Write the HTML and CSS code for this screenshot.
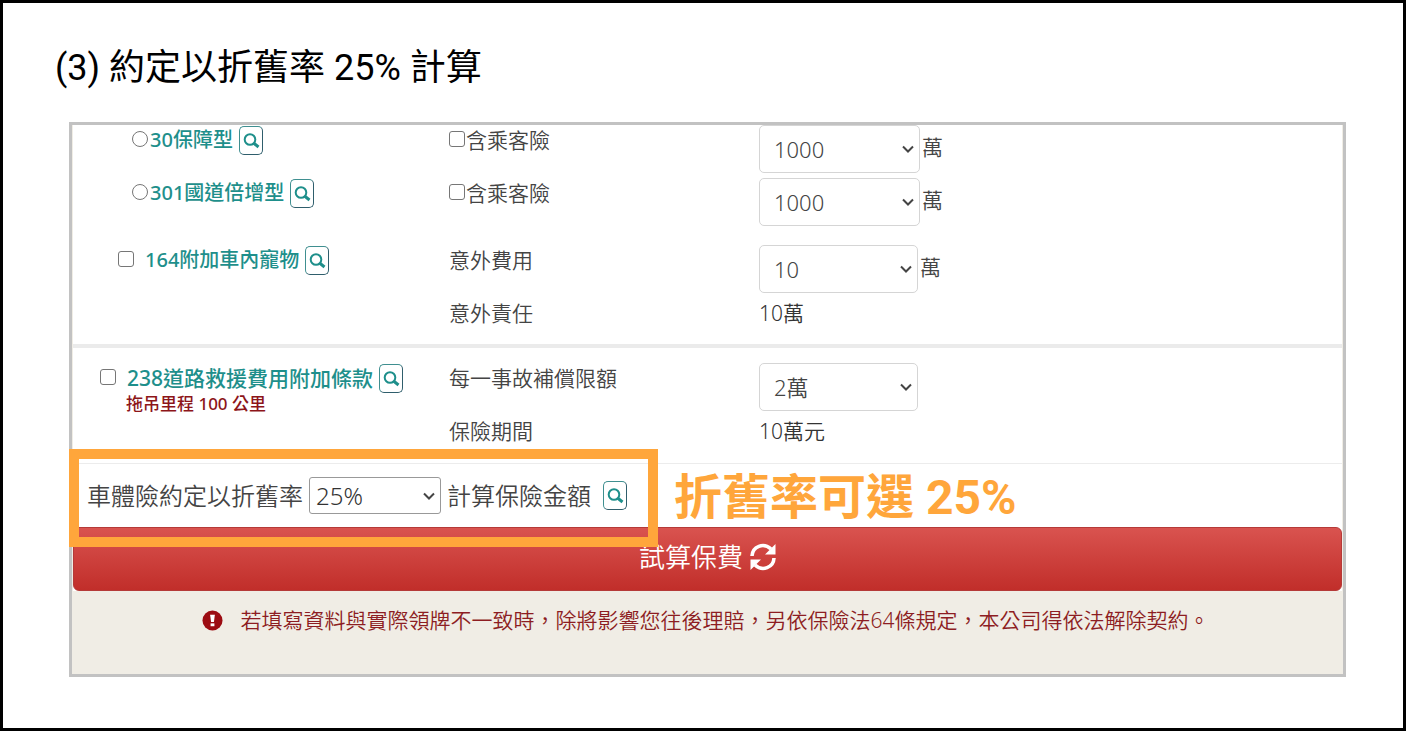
FILE: index.html
```html
<!DOCTYPE html>
<html lang="zh-Hant-TW">
<head>
<meta charset="utf-8">
<title>約定以折舊率 25% 計算</title>
<link rel="stylesheet" href="styles.css">
</head>
<body>
<svg class="sprite" aria-hidden="true">
  <symbol id="search" viewBox="0 0 22 27"><circle cx="10" cy="12.500" r="5.300" fill="none" stroke="currentColor" stroke-width="2"/><path d="M13.500 16L18.500 20" stroke="currentColor" stroke-width="3"/></symbol>
  <symbol id="chevron" viewBox="0 0 12 8"><path d="M1 1.5L6 6.5L11 1.5" fill="none" stroke="currentColor" stroke-width="2"/></symbol>
</svg>
<main class="page">
  <h1 class="title">(3) 約定以折舊率 25% 計算</h1>
  <div class="panel">
    <form class="form">
      <section class="group">
        <div class="row">
          <div class="name name-plan"><input class="radio" type="radio" name="plan" id="p30"><label class="link" for="p30">30保障型</label><button class="search" type="button" aria-label="查詢"><svg><use href="#search"/></svg></button></div>
          <div class="item"><input class="box" type="checkbox" id="c30"><label for="c30">含乘客險</label></div>
          <div class="value"><span class="pick pick-wide"><select aria-label="30保障型保額"><option>1000</option></select><svg class="chevron"><use href="#chevron"/></svg></span><span class="unit">萬</span></div>
        </div>
        <div class="row row-last">
          <div class="name name-plan"><input class="radio" type="radio" name="plan" id="p301"><label class="link" for="p301">301國道倍增型</label><button class="search" type="button" aria-label="查詢"><svg><use href="#search"/></svg></button></div>
          <div class="item"><input class="box" type="checkbox" id="c301"><label for="c301">含乘客險</label></div>
          <div class="value"><span class="pick pick-wide"><select aria-label="301國道倍增型保額"><option>1000</option></select><svg class="chevron"><use href="#chevron"/></svg></span><span class="unit">萬</span></div>
        </div>
        <div class="row">
          <div class="name name-extra"><input class="box box-spaced" type="checkbox" id="c164"><label class="link" for="c164">164附加車內寵物</label><button class="search" type="button" aria-label="查詢"><svg><use href="#search"/></svg></button></div>
          <div class="item">意外費用</div>
          <div class="value"><span class="pick"><select aria-label="意外費用"><option>10</option></select><svg class="chevron"><use href="#chevron"/></svg></span><span class="unit">萬</span></div>
        </div>
        <div class="row row-text">
          <div class="item item-second">意外責任</div>
          <div class="amount">10萬</div>
        </div>
      </section>
      <section class="group group-road">
        <div class="row">
          <div class="name name-road"><input class="box box-spaced" type="checkbox" id="c238"><label class="link link-large" for="c238">238道路救援費用附加條款</label><button class="search" type="button" aria-label="查詢"><svg><use href="#search"/></svg></button><small class="note">拖吊里程 100 公里</small></div>
          <div class="item">每一事故補償限額</div>
          <div class="value"><span class="pick"><select aria-label="每一事故補償限額"><option>2萬</option></select><svg class="chevron"><use href="#chevron"/></svg></span></div>
        </div>
        <div class="row row-text">
          <div class="item item-second">保險期間</div>
          <div class="amount">10萬元</div>
        </div>
      </section>
      <section class="rate">
        <div class="rate-field">
          <label for="rate">車體險約定以折舊率</label>
          <span class="pick pick-rate"><select id="rate"><option>25%</option></select><svg class="chevron"><use href="#chevron"/></svg></span>
          <span>計算保險金額</span>
          <button class="search" type="button" aria-label="查詢"><svg><use href="#search"/></svg></button>
          <div class="highlight"></div>
        </div>
        <strong class="callout">折舊率可選 25%</strong>
      </section>
      <button class="submit" type="button">試算保費<svg class="refresh" viewBox="0 0 26 28"><path d="M2 13C2.500 3.500 13.500 -1 21 6" fill="none" stroke="currentColor" stroke-width="3.600"/><path d="M25.500 1V11.500H15Z" fill="currentColor"/><path d="M24 15C23.500 24.500 12.500 29 5 22" fill="none" stroke="currentColor" stroke-width="3.600"/><path d="M.5 27V16.500H11Z" fill="currentColor"/></svg></button>
    </form>
    <p class="warning"><svg class="alert" viewBox="0 0 22 22"><circle cx="11" cy="11" r="10.500" fill="currentColor"/><path d="M8.500 5H13.500L12.500 12.500H9.500Z" fill="#fff"/><rect x="9" y="14" width="4" height="3" fill="#fff"/></svg>若填寫資料與實際領牌不一致時，除將影響您往後理賠，另依保險法64條規定，本公司得依法解除契約。</p>
  </div>
</main>
</body>
</html>
```
FILE: styles.css
```css
* { box-sizing: border-box; }
body {
  margin: 0;
  background: #fff;
  color: #444;
  font: 350 21px/32px "Noto Sans", "Noto Sans CJK TC", sans-serif;
}
button, select { font: inherit; color: inherit; }
.sprite { position: absolute; width: 0; height: 0; }
.page {
  min-height: 100vh;
  border: 3px solid #000;
  padding: 41px 57px 51px 66px;
}
.title {
  margin: 0 0 30px -14px;
  font: 400 36px/48px Roboto, "Noto Sans CJK TC", sans-serif;
  color: #000;
}
.panel { border: 3px solid #c2c2c2; background: #f0ede5; }
.form { margin: 0 1px; background: #fff; }
.group { padding-bottom: 14px; border-bottom: 4px solid #ebebeb; }
.group-road { padding-top: 15px; padding-bottom: 15px; border-bottom: 1px solid #ececec; }
.row {
  display: grid;
  grid-template-columns: 376fr 310fr 583fr;
  align-items: start;
  min-height: 53px;
}
.row-last { margin-bottom: 14px; }
.row-text { min-height: 32px; }
.name, .item, .value { display: flex; align-items: center; }
.name { flex-wrap: wrap; line-height: 30px; }
.name-plan { padding-left: 59px; }
.name-extra { padding-left: 45px; }
.name-road { padding-left: 27px; }
.item, .amount { line-height: 30px; }
.item-second { grid-column: 2; }
.value { height: 48px; gap: 2px; }
.unit { padding-bottom: 4px; }
.amount { color: #333; }
.link { color: #1e8f8b; font-size: 20px; font-weight: 500; }
.link-large { font-size: 21px; }
.note {
  flex-basis: 100%;
  padding-left: 26px;
  color: #8d1519;
  font-size: 17px;
  font-weight: 500;
  line-height: 22px;
}
.radio, .box {
  appearance: none;
  flex: none;
  width: 16px;
  height: 16px;
  margin: 0 1px 2px 0;
  border: 1px solid #767676;
  border-radius: 3px;
  background: #fff;
}
.radio { border-radius: 50%; margin-right: 2px; }
.box-spaced { margin-right: 11px; }
.search {
  flex: none;
  width: 24px;
  height: 29px;
  margin-left: 6px;
  padding: 0;
  border: 1px solid #3f8f90;
  border-right-color: #2f5e6c;
  border-bottom-color: #2f5e6c;
  border-radius: 5px;
  background: #fff;
  color: #1e8f8b;
}
.search svg { display: block; width: 22px; height: 27px; }
.pick { display: grid; align-items: center; width: 159px; height: 48px; }
.pick-wide { width: 161px; }
.pick > * { grid-area: 1 / 1; }
.pick select {
  appearance: none;
  width: 100%;
  height: 100%;
  padding: 0 14px;
  border: 1px solid #d5d5d5;
  border-radius: 5px;
  background: #fff;
  font-size: 22px;
}
.chevron {
  justify-self: end;
  width: 12px;
  height: 8px;
  margin-right: 6px;
  color: #444;
  pointer-events: none;
}
.rate { display: flex; align-items: center; height: 63px; font-size: 24px; }
.rate-field {
  position: relative;
  display: flex;
  align-items: center;
  gap: 6px;
  height: 100%;
  padding-left: 14px;
}
.pick-rate { width: 132px; height: 37px; }
.pick-rate select { padding: 0 6px; border-color: #999; border-radius: 3px; font-size: 24px; color: #333; }
.highlight {
  position: absolute;
  inset: -15px -31px -20px -4px;
  border: 10px solid #ffa63b;
  pointer-events: none;
}
.callout {
  margin-left: 47px;
  padding-top: 4px;
  color: #ffa63b;
  font: 700 48px/60px Roboto, "Noto Sans CJK TC", sans-serif;
}
.submit {
  display: flex;
  justify-content: center;
  align-items: center;
  gap: 7px;
  width: 100%;
  height: 64px;
  padding: 0 0 4px;
  border: 1px solid #b53a38;
  border-radius: 6px;
  background: linear-gradient(#d9534f, #c12e2a);
  color: #fff;
  font-size: 26px;
}
.refresh { width: 26px; height: 28px; }
.warning {
  display: flex;
  justify-content: center;
  align-items: center;
  gap: 18px;
  margin: 0;
  padding: 13px 4px 38px 0;
  color: #8d1d22;
}
.alert { flex: none; width: 21px; height: 21px; color: #9c0c12; }
```
